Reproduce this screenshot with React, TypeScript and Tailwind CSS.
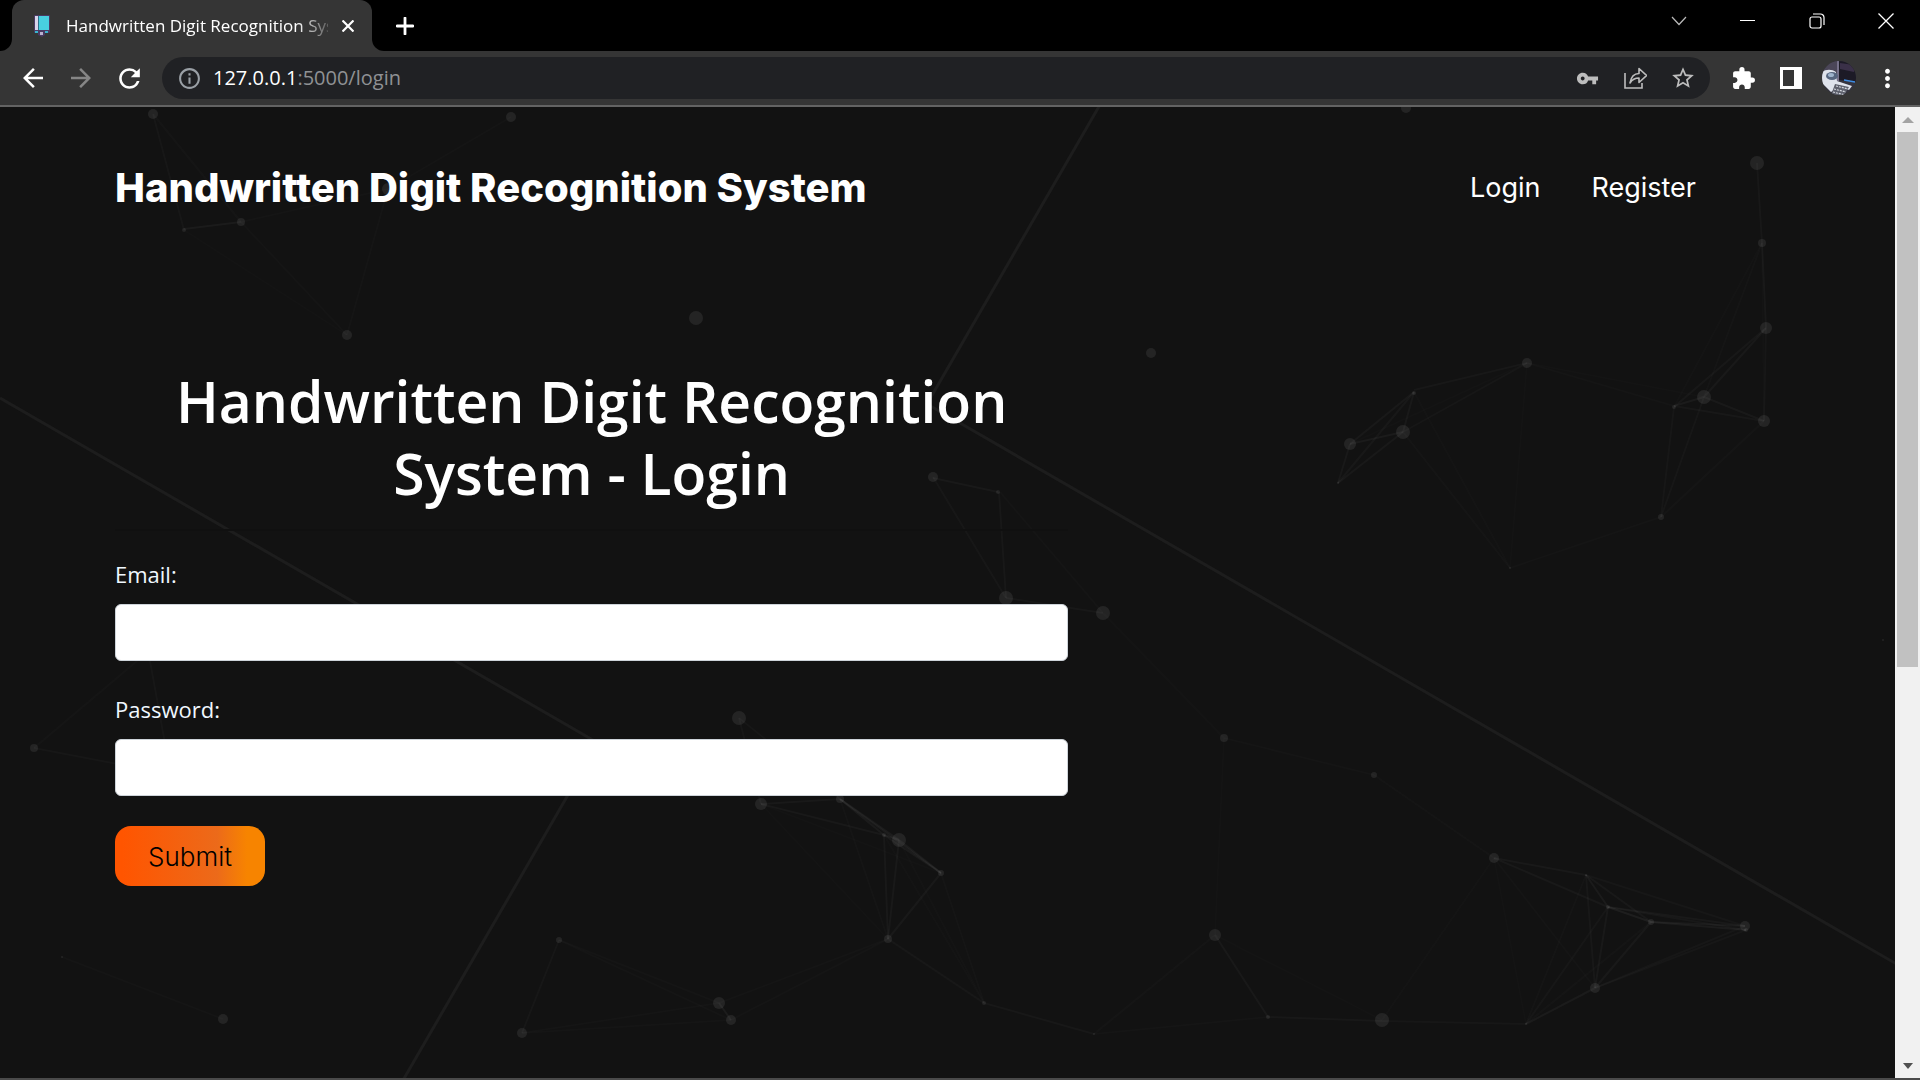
import React from "react";
import {
  MdArrowBack,
  MdArrowForward,
  MdExtension,
  MdInfoOutline,
  MdMoreVert,
  MdRefresh,
  MdStarBorder,
  MdVpnKey,
} from "react-icons/md";

const UI = "font-['Open_Sans','Noto_Sans',sans-serif]";
const BRAND = "font-['Inter','Open_Sans',sans-serif]";

type Dot = [number, number, number];
type Edge = [number, number, number, number, number];

// Particle positions: x, y, radius.
const dots: Dot[] = [
  [153, 114, 5], [511, 117, 5], [184, 230, 2], [241, 222, 4], [347, 335, 5], [696, 318, 7], [388, 189, 6],
  [1406, 108, 5], [1757, 163, 7], [1762, 243, 4], [1766, 328, 6], [1527, 363, 5], [1414, 393, 2],
  [1403, 432, 7], [1350, 444, 6], [1338, 483, 1], [1510, 568, 1], [1661, 517, 3], [1674, 407, 2],
  [1704, 397, 7], [1764, 421, 6], [933, 477, 5], [998, 492, 2], [1006, 598, 7], [1103, 613, 7],
  [1224, 738, 4], [1151, 353, 5], [1883, 640, 1], [739, 718, 7], [761, 804, 6], [840, 799, 4],
  [884, 835, 2], [899, 840, 7], [941, 873, 3], [888, 939, 4], [984, 1003, 2], [1094, 1034, 1],
  [1215, 935, 6], [1268, 1017, 2], [719, 1003, 6], [731, 1020, 5], [1374, 775, 3], [1494, 858, 5],
  [1586, 875, 1], [1608, 907, 2], [1651, 922, 3], [1745, 926, 5], [1746, 930, 2], [1595, 988, 5],
  [1526, 1024, 1], [1382, 1020, 7], [34, 748, 4], [223, 1019, 5], [62, 957, 1], [559, 940, 3],
  [522, 1033, 5],
];

// Links between particles: x1, y1, x2, y2, opacity.
const edges: Edge[] = [
  [153, 114, 184, 230, 0.04], [153, 114, 241, 222, 0.03], [184, 229, 241, 222, 0.07], [184, 230, 347, 335, 0.02],
  [241, 222, 347, 335, 0.03], [388, 189, 241, 222, 0.03], [388, 189, 511, 117, 0.03], [388, 189, 347, 335, 0.03],
  [1757, 163, 1762, 243, 0.05], [1762, 243, 1766, 328, 0.06], [1762, 243, 1674, 407, 0.02], [1762, 243, 1704, 397, 0.03],
  [1766, 328, 1674, 407, 0.05], [1766, 328, 1704, 397, 0.06], [1766, 328, 1764, 421, 0.04], [1762, 243, 1764, 421, 0.02],
  [1674, 406, 1704, 397, 0.07], [1674, 406, 1764, 421, 0.05], [1704, 397, 1764, 421, 0.06], [1674, 407, 1661, 517, 0.04],
  [1704, 397, 1661, 517, 0.04], [1764, 421, 1661, 517, 0.03], [1661, 517, 1510, 568, 0.03], [1527, 363, 1674, 406, 0.03],
  [1527, 363, 1704, 397, 0.02], [1527, 363, 1414, 390, 0.05], [1527, 363, 1403, 432, 0.04], [1527, 363, 1350, 444, 0.02],
  [1527, 363, 1510, 568, 0.02], [1527, 363, 1661, 517, 0.01], [1414, 392, 1403, 432, 0.06], [1414, 392, 1350, 444, 0.06],
  [1414, 392, 1338, 483, 0.05], [1403, 432, 1350, 444, 0.07], [1403, 432, 1338, 483, 0.06], [1350, 444, 1338, 483, 0.06],
  [1403, 432, 1510, 568, 0.03], [1414, 392, 1510, 568, 0.02], [1338, 483, 1510, 568, 0.01], [1350, 444, 1510, 568, 0.01],
  [933, 478, 998, 492, 0.06], [933, 477, 1006, 598, 0.04], [999, 492, 1006, 598, 0.05], [1000, 492, 1103, 613, 0.03],
  [1006, 598, 1103, 613, 0.05], [1103, 613, 1224, 738, 0.02], [1000, 492, 1060, 435, 0.01],
  [1224, 738, 1374, 775, 0.03], [1224, 738, 1215, 935, 0.02], [1374, 775, 1494, 858, 0.03],
  [739, 718, 761, 804, 0.04], [739, 718, 840, 799, 0.04], [761, 804, 840, 799, 0.06], [761, 804, 884, 835, 0.06],
  [761, 804, 888, 939, 0.02], [761, 804, 941, 873, 0.02], [761, 804, 719, 1003, 0.01], [840, 799, 884, 835, 0.07],
  [840, 799, 899, 840, 0.08], [840, 799, 941, 873, 0.07], [840, 799, 888, 939, 0.03], [884, 835, 899, 840, 0.09],
  [884, 835, 941, 873, 0.07], [884, 835, 888, 939, 0.06], [884, 835, 984, 1003, 0.02], [899, 840, 941, 873, 0.08],
  [899, 840, 888, 939, 0.06], [899, 840, 984, 1003, 0.02], [941, 873, 888, 939, 0.06], [941, 873, 984, 1003, 0.03],
  [888, 939, 984, 1003, 0.05], [888, 939, 719, 1003, 0.03], [888, 939, 731, 1020, 0.03], [984, 1003, 1094, 1034, 0.05],
  [719, 1003, 731, 1020, 0.08], [1094, 1034, 1215, 935, 0.03], [1094, 1034, 1268, 1017, 0.03], [1215, 935, 1268, 1017, 0.06],
  [1215, 935, 1382, 1020, 0.02], [1268, 1017, 1382, 1021, 0.05], [1382, 1021, 1526, 1024, 0.04], [1382, 1020, 1494, 858, 0.02],
  [1382, 1020, 1595, 988, 0.01], [1494, 858, 1586, 875, 0.06], [1494, 858, 1608, 907, 0.06], [1494, 858, 1595, 988, 0.03],
  [1494, 858, 1526, 1024, 0.02], [1586, 875, 1608, 907, 0.07], [1586, 875, 1651, 922, 0.06], [1586, 875, 1745, 926, 0.04],
  [1586, 875, 1595, 988, 0.05], [1586, 875, 1526, 1024, 0.03], [1608, 907, 1651, 922, 0.09], [1608, 907, 1745, 926, 0.06],
  [1608, 907, 1746, 930, 0.05], [1608, 907, 1595, 988, 0.06], [1608, 907, 1526, 1024, 0.04], [1651, 922, 1745, 926, 0.07],
  [1651, 922, 1746, 930, 0.08], [1651, 922, 1595, 988, 0.06], [1651, 922, 1526, 1024, 0.03], [1745, 926, 1595, 988, 0.04],
  [1746, 930, 1595, 988, 0.04], [1595, 988, 1526, 1024, 0.07],
  [34, 748, 150, 650, 0.03], [34, 748, 180, 776, 0.04], [148, 650, 168, 760, 0.04], [34, 748, 62, 957, 0.01],
  [62, 957, 223, 1019, 0.03], [559, 940, 522, 1033, 0.04], [559, 940, 719, 1003, 0.03], [559, 940, 731, 1020, 0.03],
  [522, 1033, 719, 1003, 0.03], [522, 1033, 731, 1020, 0.03],
];

function ParticleField() {
  return (
    <svg
      aria-hidden="true"
      className="pointer-events-none absolute inset-0 h-full w-full"
      viewBox="0 107 1895 971"
      preserveAspectRatio="xMinYMin slice"
      fill="none"
    >
      <g stroke="#1d1d1d" strokeWidth="3">
        <path d="M0 398 L598 743 L402 1082" />
        <path d="M1101 103 L927 404 L1900 966" />
      </g>
      <g stroke="#ffffff" strokeWidth="2">
        {edges.map(([x1, y1, x2, y2, o], i) => (
          <line key={i} x1={x1} y1={y1} x2={x2} y2={y2} strokeOpacity={o * 0.55} />
        ))}
      </g>
      <g fill="#ffffff" fillOpacity="0.08">
        {dots.map(([x, y, r], i) => (
          <circle key={i} cx={x} cy={y} r={r} />
        ))}
      </g>
    </svg>
  );
}

function Favicon() {
  return (
    <svg aria-hidden="true" width="18" height="24" viewBox="0 0 18 24" className="shrink-0">
      <rect x="1" y="1" width="16" height="18" rx="1" fill="#4a3a63" />
      <rect x="2" y="2" width="3" height="14" fill="#d9d3ea" />
      <rect x="5" y="2" width="11" height="14" fill="#48cfe0" />
      <rect x="5" y="2" width="1" height="14" fill="#2b6f8a" />
      <rect x="2" y="17" width="3" height="2" fill="#38b4cf" />
      <rect x="12" y="17" width="3" height="2" fill="#38b4cf" />
      <path d="M5 17h7v4l-3 2-4-2z" fill="#4a3a63" />
      <path d="M7 18h3v3h-3z" fill="#b9b2cf" />
    </svg>
  );
}

function Avatar() {
  return (
    <svg aria-hidden="true" width="34" height="34" viewBox="0 0 34 34">
      <clipPath id="avatar-clip">
        <circle cx="17" cy="17" r="17" />
      </clipPath>
      <g clipPath="url(#avatar-clip)">
        <rect width="34" height="34" fill="#35343f" />
        <path d="M0 0h17v12H0z" fill="#4b4658" />
        <path d="M16 0h18v21l-18-2z" fill="#1c1a26" />
        <path d="M18 2l14 2v7l-14-3z" fill="#3a3048" />
        <path d="M15 0h2v20h-2z" fill="#77718a" />
        <path d="M0 11c4-3 10-3 14 0l1 9 15 5-3 4-9-4-9 6L0 22z" fill="#dfe3ec" />
        <ellipse cx="10" cy="15" rx="6" ry="4" fill="#56657f" />
        <ellipse cx="9" cy="14" rx="3" ry="2" fill="#9fb4cc" />
        <path d="M13 23l14 3-5 8H9z" fill="#5d606c" />
        <path d="M14 25l12 3M12 28l12 3M11 31l12 3" stroke="#d5d8e0" strokeWidth="1.200" strokeDasharray="2 1" />
        <path d="M22 19l11 2" stroke="#3d8be0" strokeWidth="1.500" />
      </g>
    </svg>
  );
}

function ShareIcon() {
  return (
    <svg aria-hidden="true" width="24" height="24" viewBox="0 0 24 24" fill="none" stroke="#bdbdbd" strokeWidth="1.600">
      <path d="M2 7v15h17v-5" />
      <path d="M7 17c1-6 4-9.500 9-9.500V2.500l7.500 7-7.500 7v-4.500c-4 0-6.500 1-9 5z" strokeLinejoin="round" />
    </svg>
  );
}

const iconButton = "flex h-12 w-12 shrink-0 items-center justify-center";
const windowButton = "flex h-[42px] w-[69px] items-center justify-center";

function TabStrip() {
  return (
    <div className="flex h-[51px] shrink-0 items-start justify-between bg-black">
      <div className="flex items-end">
        <span className="flex h-[51px] w-3 items-end overflow-hidden bg-[#353535]">
          <span className="h-full w-full rounded-br-xl bg-black" />
        </span>
        <div className="flex h-[51px] w-[360px] items-center rounded-t-xl bg-[#353535] pl-[21px] pr-3">
          <Favicon />
          <span
            className={`${UI} ml-[15px] min-w-0 flex-1 overflow-hidden whitespace-nowrap text-[17px] text-white [mask-image:linear-gradient(to_right,black_88%,transparent_103%)]`}
          >
            Handwritten Digit Recognition System
          </span>
          <button type="button" aria-label="Close tab" className="ml-2 flex h-6 w-6 items-center justify-center">
            <svg width="12" height="12" viewBox="0 0 12 12" stroke="#fff" strokeWidth="2.200">
              <path d="M0.500 0.500l11 11M11.500 0.500l-11 11" />
            </svg>
          </button>
        </div>
        <span className="flex h-[51px] w-3 bg-[#353535]">
          <span className="h-full w-full rounded-bl-xl bg-black" />
        </span>
        <button type="button" aria-label="New tab" className="ml-[3px] flex h-[51px] w-9 items-center justify-center">
          <svg width="18" height="18" viewBox="0 0 18 18" stroke="#fff" strokeWidth="2.800" strokeLinecap="round">
            <path d="M1 9h16M9 1v16" />
          </svg>
        </button>
      </div>
      <div className="flex">
        <button type="button" aria-label="Search tabs" className={windowButton}>
          <svg width="16" height="10" viewBox="0 0 16 10" fill="none" stroke="#bbb" strokeWidth="1.200">
            <path d="M1 1l7 7.500L15 1" />
          </svg>
        </button>
        <button type="button" aria-label="Minimize" className={windowButton}>
          <svg width="16" height="2" viewBox="0 0 16 2">
            <rect y="0" width="15" height="1" fill="#fff" />
          </svg>
        </button>
        <button type="button" aria-label="Restore" className={windowButton}>
          <svg width="16" height="16" viewBox="0 0 16 16" fill="none" stroke="#fff" strokeWidth="1.200">
            <rect x="1" y="4" width="11" height="11" rx="2" />
            <path d="M4 1h7.500a3.500 3.500 0 0 1 3.500 3.500V12" />
          </svg>
        </button>
        <button type="button" aria-label="Close" className={windowButton}>
          <svg width="16" height="16" viewBox="0 0 16 16" stroke="#fff" strokeWidth="1.300">
            <path d="M0.500 0.500l15 15M15.500 0.500l-15 15" />
          </svg>
        </button>
      </div>
    </div>
  );
}

function Toolbar() {
  return (
    <div className="flex h-14 shrink-0 items-center border-b-2 border-[#636363] bg-[#353535] px-[9px]">
      <button type="button" aria-label="Back" className={`${iconButton} text-white`}>
        <MdArrowBack size={30} />
      </button>
      <button type="button" aria-label="Forward" className={`${iconButton} text-[#868686]`}>
        <MdArrowForward size={30} />
      </button>
      <button type="button" aria-label="Reload" className={`${iconButton} text-white`}>
        <MdRefresh size={31} />
      </button>
      <div className="mx-[9px] flex h-[42px] flex-1 items-center rounded-full bg-[#202124] px-[3px]">
        <button type="button" aria-label="Site information" className={`${iconButton} text-[#9aa0a6]`}>
          <MdInfoOutline size={25} />
        </button>
        <div className={`${UI} flex-1 text-xl text-[#8f9194]`}>
          <span className="text-white">127.0.0.1</span>:5000/login
        </div>
        <button type="button" aria-label="Passwords" className={`${iconButton} text-[#bdbdbd]`}>
          <MdVpnKey size={23} />
        </button>
        <button type="button" aria-label="Share" className={iconButton}>
          <ShareIcon />
        </button>
        <button type="button" aria-label="Bookmark" className={`${iconButton} text-[#bdbdbd]`}>
          <MdStarBorder size={26} />
        </button>
      </div>
      <button type="button" aria-label="Extensions" className={`${iconButton} text-white`}>
        <MdExtension size={25} />
      </button>
      <button type="button" aria-label="Side panel" className={iconButton}>
        <svg width="22" height="22" viewBox="0 0 22 22">
          <path fill="#fff" fillRule="evenodd" d="M0 0h22v22H0zM3 3v16h11V3z" />
        </svg>
      </button>
      <button type="button" aria-label="Profile" className={iconButton}>
        <Avatar />
      </button>
      <button type="button" aria-label="Menu" className={`${iconButton} text-white`}>
        <MdMoreVert size={29} />
      </button>
    </div>
  );
}

function Field({ id, label, type }: { id: string; label: string; type: string }) {
  return (
    <div className="flex flex-col">
      <label htmlFor={id} className={`${UI} mb-3 text-[22px] leading-9 text-[#f0f8ff]`}>
        {label}
      </label>
      <input
        id={id}
        type={type}
        className="h-[57px] w-full rounded-md border border-[#ced4da] bg-white px-[18px] text-2xl text-[#495057] outline-none"
      />
    </div>
  );
}

function ScrollTrack() {
  return (
    <div aria-hidden="true" className="flex w-[25px] shrink-0 flex-col items-center bg-[#f1f1f1]">
      <span className="flex h-[25px] items-center">
        <svg width="12" height="6" viewBox="0 0 12 6" fill="#a3a3a3">
          <path d="M0 6L6 0l6 6z" />
        </svg>
      </span>
      <span className="flex w-full flex-1 flex-col px-[2px]">
        <span className="h-[58.1%] bg-[#c1c1c1]" />
      </span>
      <span className="flex h-[25px] items-center">
        <svg width="10" height="6" viewBox="0 0 10 6" fill="#505050">
          <path d="M0 0h10L5 6z" />
        </svg>
      </span>
    </div>
  );
}

export default function App() {
  return (
    <div className="flex h-screen flex-col overflow-hidden bg-[#121212]">
      <TabStrip />
      <Toolbar />
      <div className="flex min-h-0 flex-1 border-b-2 border-[#4a4a4a]">
        <div className="relative min-w-0 flex-1 overflow-hidden">
          <ParticleField />
          <div className="relative px-[115px]">
            <header className={`${BRAND} flex items-center justify-between pr-[84px] pt-[51px] text-white`}>
              <a href="#" className="text-[40px] font-extrabold leading-[60px]">
                Handwritten Digit Recognition System
              </a>
              <nav className="flex gap-[51px] text-[27px] leading-9">
                <a href="#login">Login</a>
                <a href="#register">Register</a>
              </nav>
            </header>
            <main className="w-7/12 pr-[18px] pt-[147px]">
              <h1 className={`${UI} text-center text-[57px] font-semibold leading-[72px] text-white`}>
                Handwritten Digit Recognition System - Login
              </h1>
              <hr className="mt-5 border-t-2 border-[#101010]" />
              <form className="mt-[25px] flex flex-col gap-[30px]" onSubmit={(e) => e.preventDefault()}>
                <Field id="email" label="Email:" type="email" />
                <Field id="password" label="Password:" type="password" />
                <button
                  type="submit"
                  className={`${BRAND} h-[60px] w-[150px] rounded-2xl bg-[linear-gradient(to_right,#ff5500_5%,#ec6a1a_68%,#f78400_88%)] text-[26px] font-light text-black`}
                >
                  Submit
                </button>
              </form>
            </main>
          </div>
        </div>
        <ScrollTrack />
      </div>
    </div>
  );
}
